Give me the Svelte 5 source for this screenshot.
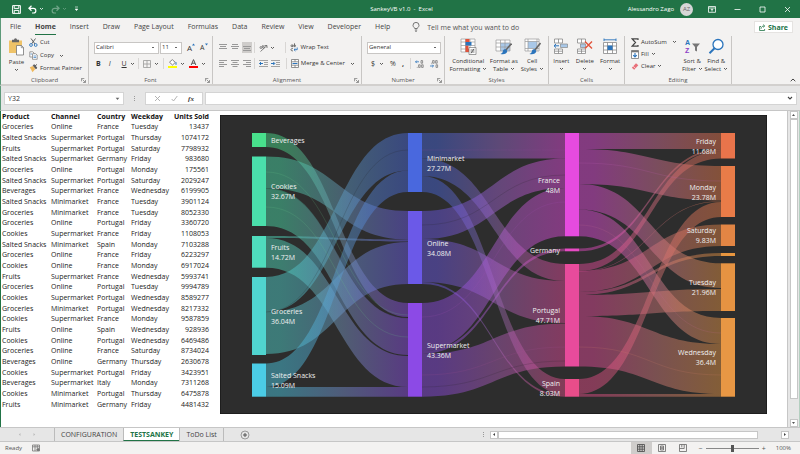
<script>
  const tabs = ['File', 'Home', 'Insert', 'Draw', 'Page Layout', 'Formulas', 'Data', 'Review', 'View', 'Developer', 'Help'];

  const columns = ['Product', 'Channel', 'Country', 'Weekday', 'Units Sold'];
  const rows = `Groceries|Online|France|Tuesday|13437
Salted Snacks|Supermarket|Portugal|Thursday|1074172
Fruits|Supermarket|Portugal|Saturday|7798932
Salted Snacks|Supermarket|Germany|Friday|983680
Groceries|Online|Portugal|Monday|175561
Salted Snacks|Supermarket|Portugal|Saturday|2029247
Beverages|Supermarket|France|Wednesday|6199905
Salted Snacks|Minimarket|France|Tuesday|3901124
Groceries|Minimarket|France|Tuesday|8052330
Groceries|Online|Portugal|Friday|3360720
Cookies|Supermarket|France|Friday|1108053
Salted Snacks|Minimarket|Spain|Monday|7103288
Groceries|Online|France|Friday|6223297
Cookies|Online|France|Monday|6917024
Fruits|Supermarket|France|Wednesday|5993741
Groceries|Online|Portugal|Tuesday|9994789
Cookies|Supermarket|Portugal|Wednesday|8589277
Groceries|Minimarket|Portugal|Wednesday|8217332
Cookies|Supermarket|France|Monday|9587859
Fruits|Online|Spain|Wednesday|928936
Cookies|Online|Portugal|Wednesday|6469486
Groceries|Online|France|Saturday|8734024
Beverages|Online|Germany|Thursday|2630678
Cookies|Supermarket|Portugal|Friday|3423951
Beverages|Supermarket|Italy|Monday|7311268
Cookies|Minimarket|Portugal|Thursday|6475878
Fruits|Minimarket|Germany|Friday|4481432`.split('\n').map((r) => r.split('|'));

  // Sankey nodes: column, top, bottom, colour, label, value
  const nodeX = [32, 188, 345, 501];
  const nodeW = 14;
  const nodes = {
    bev: [0, 18, 32, '#48e08c', 'Beverages', ''],
    coo: [0, 41.5, 111, '#4adfab', 'Cookies', '32.67M'],
    fru: [0, 121, 152.7, '#4fdcbd', 'Fruits', '14.72M'],
    gro: [0, 162, 240, '#50d4cf', 'Groceries', '36.04M'],
    sal: [0, 248.5, 281.7, '#4bcce6', 'Salted Snacks', '15.09M'],
    min: [1, 18, 77, '#4968de', 'Minimarket', '27.27M'],
    onl: [1, 96, 169, '#6b59e8', 'Online', '34.08M'],
    sup: [1, 188, 281.7, '#8c4ae6', 'Supermarket', '43.36M'],
    fra: [2, 18, 121.3, '#e64bdf', 'France', '48M'],
    ger: [2, 133.5, 136.3, '#e84bc4', 'Germany', ''],
    por: [2, 149, 251.5, '#e84b9c', 'Portugal', '47.71M'],
    spa: [2, 264, 281.7, '#e94d8a', 'Spain', '8.03M'],
    fri: [3, 18, 43.5, '#e9744b', 'Friday', '11.68M'],
    mon: [3, 51, 102, '#e97c48', 'Monday', '23.78M'],
    sat: [3, 109.5, 131, '#e28544', 'Saturday', '9.83M'],
    thu: [3, 138, 141, '#e8963f', '', ''],
    tue: [3, 148.3, 196, '#e69342', 'Tuesday', '21.96M'],
    wed: [3, 203, 281.7, '#e89744', 'Wednesday', '36.4M']
  };

  // source, target, top and bottom at the source, top and bottom at the target
  const links = [
    ['bev', 'sup', 18, 32, 188, 202],
    ['coo', 'onl', 41.5, 73, 96, 124.5],
    ['coo', 'sup', 73, 111, 203, 240],
    ['fru', 'onl', 121, 123, 124.5, 126.5],
    ['fru', 'sup', 123, 152.7, 241, 272],
    ['gro', 'min', 162, 197, 18, 55.5],
    ['gro', 'onl', 197, 239, 127, 169],
    ['sal', 'min', 248.5, 272, 55.5, 77],
    ['sal', 'sup', 272, 281.7, 272, 281.7],
    ['min', 'fra', 18, 43.5, 18, 43.5],
    ['min', 'por', 43.5, 61, 149, 166],
    ['min', 'spa', 61, 77, 264, 280],
    ['onl', 'fra', 96, 124, 43.5, 73],
    ['onl', 'por', 124, 167, 166, 208],
    ['onl', 'spa', 167, 169, 280, 281.7],
    ['sup', 'fra', 188, 236, 73, 121.3],
    ['sup', 'ger', 236, 239, 133.5, 136.3],
    ['sup', 'por', 239, 281.7, 208.5, 251.5],
    ['fra', 'fri', 18, 34, 18, 34],
    ['fra', 'mon', 34, 69, 51, 85.5],
    ['fra', 'tue', 69, 94.5, 148.3, 173],
    ['fra', 'wed', 94.5, 121.3, 203, 229],
    ['ger', 'fri', 133.5, 136.3, 34, 36],
    ['por', 'fri', 149, 156, 36, 43.5],
    ['por', 'mon', 156, 156.6, 86, 86.6],
    ['por', 'sat', 156, 177, 109.5, 131],
    ['por', 'thu', 177, 180, 138, 141],
    ['por', 'tue', 180, 201, 174, 196],
    ['por', 'wed', 201, 251.5, 229, 279],
    ['spa', 'mon', 264, 279, 87, 102],
    ['spa', 'wed', 279, 281.7, 279, 281.7]
  ];

  function ribbon([s, t, a0, a1, b0, b1]) {
    const x0 = nodeX[nodes[s][0]] + nodeW;
    const x1 = nodeX[nodes[t][0]];
    const m = (x0 + x1) / 2;
    return `M${x0} ${a0}C${m} ${a0} ${m} ${b0} ${x1} ${b0}L${x1} ${b1}C${m} ${b1} ${m} ${a1} ${x0} ${a1}Z`;
  }

  // midway colour of a band: the average of both ends, slightly greyed
  function midway(a, b) {
    const rgb = [1, 3, 5].map((i) => (parseInt(a.slice(i, i + 2), 16) + parseInt(b.slice(i, i + 2), 16)) / 2);
    const grey = (rgb[0] + rgb[1] + rgb[2]) / 3;
    return `rgb(${rgb.map((v) => Math.round(v * 0.75 + grey * 0.25)).join(',')})`;
  }

  // hairlines that trace the parts inside the wide bands
  const traces = [
    [0, 57, 200, '#6ac98a'], [0, 92, 222, '#6ac98a'], [0, 73.5, 203, '#222'],
    [0, 197, 35, '#222'], [1, 35, 35, '#8f4fa0'], [1, 110, 60, '#222'],
    [1, 202, 87, '#a04fb0'], [1, 260, 232, '#a04f90'], [1, 272, 246, '#222'],
    [2, 48, 66, '#c060b8'], [2, 110, 218, '#c06a90'], [2, 232, 260, '#d08068']
  ];
  const tracePath = ([c, a, b]) => {
    const x0 = nodeX[c] + nodeW;
    const x1 = nodeX[c + 1];
    const m = (x0 + x1) / 2;
    return `M${x0} ${a}C${m} ${a} ${m} ${b} ${x1} ${b}`;
  };

  let active = $state('Home');
  let cell = $state('Y32');
  let formula = $state('');
  let zoom = $state(50);
</script>

{#snippet chev()}<svg class="chev" viewBox="0 0 5 4" aria-hidden="true"><path d="M1 1l1.5 1.5L4 1" /></svg>{/snippet}

{#snippet launch()}
  <button class="launch" aria-label="More options"><svg viewBox="0 0 6 6" width="5" height="5"><path d="M.5 4V.5H4M2 2l3 3M5.400 2.500V5.400H2.500" fill="none" stroke="#666" stroke-width=".8" /></svg></button>
{/snippet}

{#snippet lines(ws, anchor)}
  <svg width="10" height="8" viewBox="0 0 10 8" aria-hidden="true">
    {#each ws as w, i}
      <rect x={anchor === 'l' ? 1 : anchor === 'r' ? 9 - w : 5 - w / 2} y={i * 2} width={w} height="1" fill="#999" />
    {/each}
  </svg>
{/snippet}

<div class="app">
  <header class="title">
    <div class="quick">
      <button aria-label="Save"><svg width="9" height="9" viewBox="0 0 9 9"><path d="M.6.6h7.800v7.800H.6zM2.200.8v2.600h4.600V.8M2.200 8.200V5.400h4.600v2.800" fill="none" stroke="#fff" stroke-width="1" /></svg></button>
      <button aria-label="Undo" class="undo"><svg width="9" height="9" viewBox="0 0 9 9"><path d="M3.500.8L.9 3.300l2.600 2.500M1.200 3.300h4.300a2.300 2.300 0 010 4.700H4" fill="none" stroke="#fff" stroke-width="1.200" /></svg>{@render chev()}</button>
      <button aria-label="Redo" class="undo dim"><svg width="9" height="9" viewBox="0 0 9 9"><path d="M5.500.8l2.600 2.500-2.600 2.500M7.800 3.300H3.500a2.300 2.300 0 000 4.700H5" fill="none" stroke="#fff" stroke-width="1.200" /></svg>{@render chev()}</button>
      <button aria-label="Customize Quick Access Toolbar"><svg width="5" height="6" viewBox="0 0 5 6"><path d="M1 1h3M1.200 3h2.600L2.500 4.600z" fill="#fff" stroke="#fff" stroke-width=".6" /></svg></button>
    </div>
    <h1>SankeyVB v1.0 &nbsp;- &nbsp;Excel</h1>
    <div class="account">
      <span>Alessandro Zago</span>
      <span class="avatar">AZ</span>
      <button aria-label="Ribbon display options"><svg width="8" height="7" viewBox="0 0 8 7"><path d="M.5.5h7v5.800h-7zM.5 2h7M4 5.500V3M2.800 4L4 2.800 5.200 4" fill="none" stroke="#fff" stroke-width=".8" /></svg></button>
      <button aria-label="Minimize"><svg width="7" height="7" viewBox="0 0 7 7"><path d="M.5 3.500h6" stroke="#fff" stroke-width=".8" /></svg></button>
      <button aria-label="Maximize"><svg width="7" height="7" viewBox="0 0 7 7"><path d="M1 1h5v5H1z" fill="none" stroke="#fff" stroke-width=".8" /></svg></button>
      <button aria-label="Close"><svg width="7" height="7" viewBox="0 0 7 7"><path d="M1 1l5 5M6 1L1 6" stroke="#fff" stroke-width=".8" /></svg></button>
    </div>
  </header>

  <nav class="tabs">
    {#each tabs as t}
      <button class:active={t === active} onclick={() => (active = t)}>{t}</button>
    {/each}
    <label class="tell">
      <svg width="8" height="10" viewBox="0 0 8 10"><path d="M2.700 6.500C2.700 5.500 1 5 1 3.400a3 3 0 016 0C7 5 5.300 5.500 5.300 6.500zM2.800 8h2.400M3.200 9.300h1.600" fill="none" stroke="#555" stroke-width=".8" /></svg>
      <input type="text" placeholder="Tell me what you want to do" />
    </label>
    <button class="share"><svg width="7" height="7" viewBox="0 0 7 7"><path d="M2 2.500H.6v4h5V5M2 4.800c.2-1.800 1.300-2.800 3-2.800M4.200.600L5.800 2 4.200 3.400" fill="none" stroke="#217346" stroke-width=".8" /></svg>Share</button>
  </nav>

  <div class="ribbon">
    <section class="g clip">
      <div class="body">
        <button class="big">
          <svg width="17" height="18" viewBox="0 0 17 18"><path d="M1 2.500h13V15H1z" fill="#efc368" /><path d="M4 1.800h2a1.500 1.500 0 013 0h2v2.400H4z" fill="#666" /><path d="M8.500 7.500h5l2 2V17h-7z" fill="#fff" stroke="#777" stroke-width=".8" /><path d="M13.300 7.500v2.200h2.200" fill="none" stroke="#777" stroke-width=".7" /></svg>
          <span>Paste</span>{@render chev()}
        </button>
        <div class="stack">
          <button><svg width="9" height="9" viewBox="0 0 9 9"><path d="M2 .5l4 5.500M6.500.5l-4 5.500" stroke="#555" stroke-width=".9" /><circle cx="2" cy="7" r="1.400" fill="none" stroke="#2a74bc" stroke-width=".9" /><circle cx="6.700" cy="7" r="1.400" fill="none" stroke="#2a74bc" stroke-width=".9" /></svg>Cut</button>
          <button><svg width="9" height="9" viewBox="0 0 9 9"><path d="M.8.8h3l1.200 1.200V6H.8z" fill="#fff" stroke="#777" stroke-width=".7" /><path d="M3.500 2.700h3L8.200 4v4.300H3.500z" fill="#fff" stroke="#777" stroke-width=".7" /><path d="M4.500 5h2.700M4.500 6.500h2.700M1.500 3h1.500" stroke="#2a74bc" stroke-width=".7" /></svg>Copy &nbsp;{@render chev()}</button>
          <button><svg width="9" height="9" viewBox="0 0 9 9"><path d="M.8 3.200L4 2l2.300 3L3.500 8.200z" fill="#efb85c" /><path d="M4.200 1.500l2.700 3.300 1-.900-2.600-3.200zM6 2l2-1.600" fill="#555" stroke="#555" stroke-width=".9" /></svg>Format Painter</button>
        </div>
      </div>
      <footer>Clipboard{@render launch()}</footer>
    </section>

    <section class="g font">
      <div class="body col">
        <div class="line">
          <select class="family" aria-label="Font"><option>Calibri</option></select>
          <select class="size" aria-label="Font size"><option>11</option></select>
          <button class="grow" aria-label="Increase font size">A<svg width="3" height="3" viewBox="0 0 3 3"><path d="M0 2.500L1.500.5 3 2.500z" fill="#2a74bc" /></svg></button>
          <button class="grow sm" aria-label="Decrease font size">A<svg width="3" height="3" viewBox="0 0 3 3"><path d="M0 .5h3L1.500 2.500z" fill="#2a74bc" /></svg></button>
        </div>
        <div class="line style">
          <button class="bi"><b>B</b></button>
          <button class="bi"><i>I</i></button>
          <button><u>U</u> {@render chev()}</button>
          <button class="sep" aria-label="Borders"><svg width="8" height="8" viewBox="0 0 8 8"><path d="M.5.5h7v7h-7zM4 .5v7M.5 4h7" fill="none" stroke="#999" stroke-width=".8" /></svg>{@render chev()}</button>
          <button class="sep" aria-label="Fill color"><svg width="9" height="9" viewBox="0 0 9 9"><path d="M1.500 3.200L4.300.6l3 2.800L4.500 6z" fill="#fff" stroke="#666" stroke-width=".8" /><path d="M8 3.200v2.600" stroke="#2a74bc" stroke-width="1" /><path d="M0 7h9v2H0z" fill="#ff0" /></svg>{@render chev()}</button>
          <button aria-label="Font color"><svg width="9" height="9" viewBox="0 0 9 9"><path d="M2.200 6L4.500.6 6.800 6M3 4.200h3" fill="none" stroke="#555" stroke-width="1" /><path d="M0 7h9v2H0z" fill="#f00" /></svg>{@render chev()}</button>
        </div>
      </div>
      <footer>Font{@render launch()}</footer>
    </section>

    <section class="g align">
      <div class="body col">
        <div class="line">
          <button aria-label="Top align">{@render lines([8, 6, 8], 'c')}</button>
          <button aria-label="Middle align">{@render lines([6, 8, 6], 'c')}</button>
          <button class="on" aria-label="Bottom align">{@render lines([0, 8, 6, 8], 'c')}</button>
          <button class="sep" aria-label="Orientation"><svg width="9" height="8" viewBox="0 0 9 8"><path d="M1.500 7.500L8 1.500M8 4V1.500H5.500" fill="none" stroke="#666" stroke-width=".8" /><path d="M1 3.500a1 1 0 102 0 1 1 0 10-2 0M3.800 1v3a1 1 0 100-1.500" fill="none" stroke="#555" stroke-width=".7" /></svg>{@render chev()}</button>
          <button class="sep wrap"><svg width="8" height="9" viewBox="0 0 8 9"><path d="M1 2.800a1 1 0 102 0 1 1 0 10-2 0M3 1.800v2M4.500.3v3.500a1 1 0 100-2M3 5.800a1.200 1.200 0 100 1.800" fill="none" stroke="#555" stroke-width=".8" /><path d="M7.200 4.500v2.200H4M5.400 5.400L4 6.700 5.400 8" fill="none" stroke="#2a74bc" stroke-width=".9" /></svg>Wrap Text</button>
        </div>
        <div class="line">
          <button aria-label="Align left">{@render lines([8, 5, 8, 5], 'l')}</button>
          <button aria-label="Center">{@render lines([8, 5, 8, 5], 'c')}</button>
          <button aria-label="Align right">{@render lines([8, 5, 8, 5], 'r')}</button>
          <button class="sep" aria-label="Decrease indent"><svg width="10" height="8" viewBox="0 0 10 8"><path d="M0 .5h9M5 2.500h4M5 4.500h4M0 6.500h9" stroke="#999" stroke-width=".9" /><path d="M4 3.500H.5M2 2L.5 3.500 2 5" fill="none" stroke="#2a74bc" stroke-width="1" /></svg></button>
          <button aria-label="Increase indent"><svg width="10" height="8" viewBox="0 0 10 8"><path d="M0 .5h9M5 2.500h4M5 4.500h4M0 6.500h9" stroke="#999" stroke-width=".9" /><path d="M0 3.500h3.500M2.300 2l1.500 1.500L2.300 5" fill="none" stroke="#2a74bc" stroke-width="1" /></svg></button>
          <button class="sep wrap"><svg width="8" height="9" viewBox="0 0 8 9"><path d="M.5.5h7v8h-7zM.5 2.800h7M.5 6.200h7M4 .5v2.300M4 6.200v2.300" fill="#fff" stroke="#777" stroke-width=".8" /><path d="M1.500 4.500h5" stroke="#2a74bc" stroke-width="1" /></svg>Merge &amp; Center &nbsp;{@render chev()}</button>
        </div>
      </div>
      <footer>Alignment{@render launch()}</footer>
    </section>

    <section class="g number">
      <div class="body col">
        <div class="line"><select class="fmt" aria-label="Number format"><option>General</option></select></div>
        <div class="line nums">
          <button>$ {@render chev()}</button>
          <button>%</button>
          <button><b>,</b></button>
          <button class="sep" aria-label="Increase decimal"><svg width="9" height="8" viewBox="0 0 9 8"><path d="M4 1.800H.5M1.800.5L.5 1.800l1.300 1.300" fill="none" stroke="#2a74bc" stroke-width=".8" /><path d="M6 .6h1.600v2.600H6zM3.600 4.800h1.600v2.600H3.600zM6.600 4.800h1.600v2.600H6.600zM1.800 7.400h.8" fill="none" stroke="#555" stroke-width=".6" /></svg></button>
          <button aria-label="Decrease decimal"><svg width="9" height="8" viewBox="0 0 9 8"><path d="M0 6h3.500M2.200 4.700L3.500 6 2.200 7.300" fill="none" stroke="#2a74bc" stroke-width=".8" /><path d="M2.600.6h1.600v2.600H2.600zM5.600.6h1.600v2.600H5.600zM1 3.200h.8M6 4.800h1.600v2.600H6z" fill="none" stroke="#555" stroke-width=".6" /></svg></button>
        </div>
      </div>
      <footer>Number{@render launch()}</footer>
    </section>

    <section class="g styles">
      <div class="body">
        <button class="big"><svg width="17" height="17" viewBox="0 0 17 17"><path d="M1 1h14v13H1zM1 4h14M1 7.500h14M1 11h14M5.500 1v13M10 1v13" fill="#fff" stroke="#999" stroke-width=".7" /><path d="M5.500 1h4v3h-4zM5.500 7.500h3V11h-3zM5.500 11h5v3h-5z" fill="#e2523a" /><path d="M5.500 4h6v3.500h-6z" fill="#2a74bc" /><path d="M9 9.500h7v7H9z" fill="#fff" stroke="#777" stroke-width=".7" /><path d="M10.500 12h4M10.500 14h4M14 10.800l-3 4.500" stroke="#444" stroke-width=".7" /></svg>
          <span>Conditional<br />Formatting {@render chev()}</span></button>
        <button class="big"><svg width="17" height="17" viewBox="0 0 17 17"><path d="M1 2h14v11H1z" fill="#fff" /><path d="M5.500 5h9.500v8H5.500z" fill="#a9c8e8" /><path d="M1 2h14v11H1zM1 5h14M1 9h14M5.500 2v11M10 2v11" fill="none" stroke="#999" stroke-width=".7" /><path d="M16.500 5.500l-6 7" stroke="#666" stroke-width="1.600" /><path d="M11 11.500c-2-1-3 .5-3.200 2-.2 1.500-1.500 2-2.300 2.500 3 .8 6.500 0 6.800-3z" fill="#2a74bc" /></svg>
          <span>Format as<br />Table {@render chev()}</span></button>
        <button class="big"><svg width="17" height="17" viewBox="0 0 17 17"><path d="M1 1h14v12H1z" fill="#fff" /><path d="M4 3.500h9v7H4z" fill="#a9c8e8" /><path d="M1 1h14v12H1zM1 3.500h14M1 10.500h14M4 1v12M13 1v12" fill="none" stroke="#999" stroke-width=".7" /><path d="M16.500 5l-6 7.500" stroke="#666" stroke-width="1.600" /><path d="M11 11.500c-2-1-3 .5-3.200 2-.2 1.500-1.500 2-2.300 2.500 3 .8 6.500 0 6.800-3z" fill="#2a74bc" /></svg>
          <span>Cell<br />Styles {@render chev()}</span></button>
      </div>
      <footer>Styles</footer>
    </section>

    <section class="g cells">
      <div class="body">
        <button class="big"><svg width="17" height="17" viewBox="0 0 17 17"><path d="M1.500 1h8v4h-8zM5.500 1v4M1.500 11h8v4.500h-8zM5.500 11v4.500M1.500 13.200h8" fill="#fff" stroke="#888" stroke-width=".8" /><path d="M7.500 6h7v3.500h-7z" fill="#a9c8e8" stroke="#888" stroke-width=".7" /><path d="M6 7.800H1M3 6L1 7.800l2 1.800" fill="none" stroke="#2a74bc" stroke-width="1" /></svg><span>Insert</span>{@render chev()}</button>
        <button class="big"><svg width="17" height="17" viewBox="0 0 17 17"><path d="M1.500 1h8v4h-8zM5.500 1v4M1.500 11h8v4.500h-8zM5.500 11v4.500M1.500 13.200h8" fill="#fff" stroke="#888" stroke-width=".8" /><path d="M4.500 6h5v3.500h-5z" fill="#a9c8e8" stroke="#888" stroke-width=".7" /><path d="M9 3.500l7 7M16 3.500l-7 7" stroke="#e2523a" stroke-width="1.400" /></svg><span>Delete</span>{@render chev()}</button>
        <button class="big"><svg width="17" height="17" viewBox="0 0 17 17"><path d="M1.500 4.500h13v11h-13zM1.500 8h13M1.500 12h13M5.500 4.500v11M10.500 4.500v11" fill="#fff" stroke="#888" stroke-width=".8" /><path d="M5.500 7.500h5v4.500h-5z" fill="#2a74bc" /><path d="M2 1.800h12M2 .5v2.600M14 .5v2.600" stroke="#2a74bc" stroke-width=".9" /></svg><span>Format</span>{@render chev()}</button>
      </div>
      <footer>Cells</footer>
    </section>

    <section class="g edit">
      <div class="body">
        <div class="stack">
          <button><svg width="8" height="9" viewBox="0 0 8 9"><path d="M7 2V.9H1.200L4.500 4.500 1.200 8.100H7V7" fill="none" stroke="#444" stroke-width="1.200" /></svg>AutoSum &nbsp; {@render chev()}</button>
          <button><svg width="8" height="9" viewBox="0 0 8 9"><path d="M.5.5h7v8h-7z" fill="#fff" stroke="#777" stroke-width=".8" /><path d="M.5.500h7v1.800h-7z" fill="#777" /><path d="M4 3v4M2.200 5.200L4 7l1.800-1.800" fill="none" stroke="#2a74bc" stroke-width="1.100" /></svg>Fill {@render chev()}</button>
          <button><svg width="8" height="9" viewBox="0 0 8 9"><path d="M.8 5.800L5 1.300l2.300 2L3.200 7.800z" fill="#e8707a" /><path d="M2.200 4.300l2.300 2.100" stroke="#fff" stroke-width=".6" /></svg>Clear {@render chev()}</button>
        </div>
        <button class="big"><svg class="az" width="17" height="17" viewBox="0 0 17 17"><text x="1" y="7" fill="#2a74bc">A</text><text x="1" y="15" fill="#8b3fc6">Z</text><path d="M8 5.500h8l-3 3.500v4.500l-2-1V9z" fill="#777" /></svg><span>Sort &amp;<br />Filter {@render chev()}</span></button>
        <button class="big"><svg width="17" height="17" viewBox="0 0 17 17"><circle cx="10" cy="6.500" r="5" fill="#fff" stroke="#2a74bc" stroke-width="1.300" /><path d="M6.500 10.300l-5 5" stroke="#2a74bc" stroke-width="2" /></svg><span>Find &amp;<br />Select {@render chev()}</span></button>
      </div>
      <footer>Editing</footer>
    </section>
    <button class="collapse" aria-label="Collapse the ribbon"><svg width="6" height="4" viewBox="0 0 6 4"><path d="M.7 3.200L3 1l2.300 2.200" fill="none" stroke="#444" /></svg></button>
  </div>

  <div class="formula">
    <label class="name"><input aria-label="Name box" bind:value={cell} /><svg width="5" height="4" viewBox="0 0 5 4"><path d="M.7.8h3.600L2.500 3z" fill="#666" /></svg></label>
    <span class="dots"></span>
    <div class="fx">
      <button aria-label="Cancel"><svg width="7" height="7" viewBox="0 0 7 7"><path d="M1 1l5 5M6 1L1 6" stroke="#aaa" stroke-width=".9" /></svg></button>
      <button aria-label="Enter"><svg width="7" height="7" viewBox="0 0 7 7"><path d="M.7 4l1.800 2L6.300 1" fill="none" stroke="#aaa" stroke-width=".9" /></svg></button>
      <button class="fn">fx</button>
    </div>
    <label class="entry"><input aria-label="Formula bar" bind:value={formula} /><svg width="6" height="5" viewBox="0 0 6 5"><path d="M1 1l2 2 2-2" fill="none" stroke="#444" stroke-width="1.100" /></svg></label>
  </div>

  <main>
    <div class="sheet">
      <table>
        <thead><tr>{#each columns as c}<th scope="col">{c}</th>{/each}</tr></thead>
        <tbody>
          {#each rows as r}<tr>{#each r as v}<td>{v}</td>{/each}</tr>{/each}
        </tbody>
      </table>
      <svg class="chart" viewBox="0 0 547 299" role="img" aria-label="Sankey diagram of units sold by product, channel, country and weekday">
        <defs>
          {#each links as l}
            {@const from = nodes[l[0]]}
            {@const to = nodes[l[1]]}
            <linearGradient id="{l[0]}-{l[1]}" gradientUnits="userSpaceOnUse" x1={nodeX[from[0]] + nodeW} x2={nodeX[to[0]]} y1="0" y2="0">
              <stop offset=".1" stop-color={from[3]} />
              <stop offset=".55" stop-color={midway(from[3], to[3])} />
              <stop offset="1" stop-color={to[3]} />
            </linearGradient>
          {/each}
        </defs>
        <rect class="panel" width="547" height="299" />
        {#each links as l}<path class="link" d={ribbon(l)} fill="url(#{l[0]}-{l[1]})" />{/each}
        {#each traces as t}<path class="trace" d={tracePath(t)} stroke={t[3]} />{/each}
        {#each Object.values(nodes) as [c, y0, y1, fill, name, value]}
          {@const right = c > 1}
          {@const x = right ? nodeX[c] - 5 : nodeX[c] + 19}
          {@const mid = (y0 + y1) / 2}
          <rect x={nodeX[c]} y={y0} width={nodeW} height={y1 - y0} {fill} />
          {#if name}<text {x} y={value ? mid - 2 : mid + 3} text-anchor={right ? 'end' : 'start'}>{name}</text>{/if}
          {#if value}<text {x} y={mid + 8} text-anchor={right ? 'end' : 'start'}>{value}</text>{/if}
        {/each}
      </svg>
    </div>
    <div class="vbar">
      <button aria-label="Scroll up"><svg width="5" height="4" viewBox="0 0 5 4"><path d="M1 3h3L2.500 1z" fill="#555" /></svg></button>
      <span class="thumb"></span>
      <span class="rest"></span>
      <button aria-label="Scroll down"><svg width="5" height="4" viewBox="0 0 5 4"><path d="M1 1h3L2.500 3z" fill="#555" /></svg></button>
    </div>
  </main>

  <div class="sheets">
    <div class="arrows"><svg width="3" height="5" viewBox="0 0 3 5"><path d="M2.500 1v3L.8 2.500z" fill="#bbb" /></svg><svg width="3" height="5" viewBox="0 0 3 5"><path d="M.5 1v3l1.700-1.500z" fill="#bbb" /></svg></div>
    <button>CONFIGURATION</button>
    <button class="current">TESTSANKEY</button>
    <button>ToDo List</button>
    <button class="add" aria-label="New sheet"><svg width="10" height="10" viewBox="0 0 10 10"><circle cx="5" cy="5" r="4" fill="none" stroke="#888" stroke-width=".8" /><path d="M5 3v4M3 5h4" stroke="#555" stroke-width="1" /></svg></button>
    <div class="hbar">
      <span class="dots"></span>
      <button aria-label="Scroll left"><svg width="4" height="5" viewBox="0 0 4 5"><path d="M3 1v3L1 2.500z" fill="#444" /></svg></button>
      <span class="thumb"></span>
      <span class="rest"></span>
      <button aria-label="Scroll right"><svg width="4" height="5" viewBox="0 0 4 5"><path d="M1 1v3l2-1.500z" fill="#444" /></svg></button>
    </div>
  </div>

  <footer class="status">
    <span>Ready</span>
    <svg width="9" height="8" viewBox="0 0 9 8"><path d="M.5 1h7v6h-7zM.5 2.800h7M3 1v6M5.300 1v3" fill="none" stroke="#777" stroke-width=".8" /><circle cx="6" cy="5.500" r="1.600" fill="#777" /></svg>
    <div class="views">
      <button class="on" aria-label="Normal"><svg width="8" height="8" viewBox="0 0 8 8"><path d="M.5.5h7v7h-7zM.5 2.800h7M.5 5.200h7M2.800.5v7M5.200.5v7" fill="none" stroke="#555" stroke-width=".9" /></svg></button>
      <button aria-label="Page layout"><svg width="8" height="8" viewBox="0 0 8 8"><path d="M.5.5h7v7h-7zM2.500 2h3v4h-3zM2.500 3.300h3M2.500 4.700h3" fill="none" stroke="#666" stroke-width=".8" /></svg></button>
      <button aria-label="Page break preview"><svg width="8" height="8" viewBox="0 0 8 8"><path d="M.5.5h7v7h-7zM.5 4.500h4.700V.5M2.800.5v2.800" fill="none" stroke="#666" stroke-width=".8" /></svg></button>
    </div>
    <label class="zoom"><span>−</span><input type="range" min="0" max="100" aria-label="Zoom" bind:value={zoom} /><span>+</span></label>
    <span class="pct">100%</span>
  </footer>
</div>

<style>
  :global(body) { margin: 0; }
  .app { min-height: 100vh; display: flex; flex-direction: column; background: #f3f2f1; font: 6px/9px 'Open Sans', 'Noto Sans', sans-serif; color: #333; box-sizing: border-box; }
  button, input, select { font: inherit; color: inherit; border: 0; background: none; padding: 0; margin: 0; border-radius: 0; outline: 0; min-width: 0; }
  button { display: flex; align-items: center; white-space: nowrap; }
  svg { display: block; flex: none; }
  .az text { font: 700 7px 'Liberation Sans', sans-serif; }
  .chev { display: inline-block; width: 5px; height: 4px; vertical-align: middle; }
  .chev path { fill: none; stroke: currentColor; stroke-width: .8; }

  .title { display: flex; align-items: center; height: 18px; background: #217346; color: #fff; }
  .quick, .account { flex: 1; display: flex; align-items: center; }
  .quick { padding-left: 12px; gap: 7px; }
  .undo { gap: 2px; }
  .dim { opacity: .35; }
  h1 { margin: 0; font-size: 6px; font-weight: 400; line-height: 18px; white-space: nowrap; }
  .account { justify-content: flex-end; gap: 18px; padding-right: 9px; }
  .avatar { width: 13px; height: 13px; line-height: 13px; border-radius: 50%; background: #d6d6d6; color: #666; text-align: center; margin: 0 -3px 0 -12px; }

  .tabs { display: flex; align-items: center; height: 18px; padding: 0 7px 0 9px; gap: 14px; font-size: 7px; color: #444; border-left: 1px solid #5d9a79; box-sizing: border-box; }
  .tabs > button { height: 15px; border-bottom: 1px solid transparent; box-sizing: border-box; }
  .tabs > .active { font-weight: 700; border-bottom: 1px solid #217346; }
  .tell { flex: 1; display: flex; align-items: center; gap: 7px; margin-left: 8px; }
  .tell input { flex: 1; height: 12px; }
  .tell input::placeholder { color: #555; opacity: 1; }
  .tabs > .share { gap: 2px; height: 12px; padding: 0 4px; background: #fff; color: #217346; font-weight: 700; border: 1px solid #e5e3e1; }

  .ribbon { display: flex; height: 50px; box-sizing: border-box; border-left: 1px solid #5d9a79; border-bottom: 2px solid #d2d0ce; }
  .g { display: flex; flex-direction: column; border-right: 1px solid #c8c6c4; box-sizing: border-box; }
  .body { flex: 1; display: flex; justify-content: center; gap: 6px; }
  .body.col { flex-direction: column; justify-content: flex-start; padding-top: 5px; gap: 3px; }
  .g footer { position: relative; height: 8px; text-align: center; color: #555; }
  .launch { position: absolute; right: 2px; top: 2px; }
  .stack { display: flex; flex-direction: column; }
  .stack button { height: 12px; gap: 2px; }
  .clip .stack button { height: 13px; }
  .big { flex-direction: column; align-self: flex-start; padding-top: 2px; text-align: center; }
  .big span { line-height: 8px; margin-top: 2px; }
  .big > .chev { margin-top: 2px; }
  .line { display: flex; align-items: center; height: 13px; }
  .clip { width: 88px; } .font { width: 124px; } .align { width: 149px; } .number { width: 83px; }
  .styles { width: 104px; } .cells { width: 76px; } .edit { width: 107px; }
  .clip .body { justify-content: flex-start; padding-left: 7px; gap: 4px; }
  .font .body, .number .body { padding-left: 5px; }
  .styles .body { gap: 3px; }
  .edit .body { gap: 2px; justify-content: flex-start; padding-left: 6px; }
  .edit .stack { padding-right: 3px; }
  select { appearance: none; height: 12px; border: 1px solid #c8c6c4; background: #fff linear-gradient(#666, #666) no-repeat right 4px center / 2px 1px; padding: 0 3px 0 1px; box-sizing: border-box; }
  .family { width: 65px; } .size { width: 22px; margin-left: 1px; } .fmt { width: 74px; }
  .grow { font-size: 8px; margin-left: 5px; align-items: flex-start; }
  .sm { font-size: 7px; }
  .style { justify-content: space-between; padding: 0 6px 0 2px; font-size: 7px; }
  .style button { gap: 3px; }
  .style .bi { width: 9px; }
  .sep { border-left: 1px solid #d8d6d4; padding-left: 4px; height: 11px; }
  .align .body { padding-left: 5px; }
  .align .line { gap: 2px; }
  .align .line button { height: 11px; gap: 2px; }
  .align .line .wrap { margin-left: auto; }
  .align .line:first-child .wrap { padding-right: 32px; }
  .align .line:last-child .wrap { padding-right: 6px; }
  .on { background: #cfcdcb; }
  .nums { justify-content: space-between; padding: 0 5px 0 4px; font-size: 7px; }
  .nums button { gap: 4px; }
  .collapse { margin: auto 4px 0 auto; height: 8px; }

  .formula { display: flex; height: 25px; padding: 6px 3px 5px 3px; box-sizing: border-box; background: #e6e6e6; gap: 4px; border-bottom: 1px solid #c6c6c6; border-left: 1px solid #5d9a79; font-size: 7px; }
  .formula input { flex: 1; }
  .name, .fx, .entry { display: flex; align-items: center; background: #fff; border: 1px solid #d4d4d4; box-sizing: border-box; padding: 0 3px; }
  .name { width: 120px; }
  .fx { width: 58px; justify-content: space-around; }
  .fn { font: italic 700 7px 'Liberation Serif', serif; }
  .entry { flex: 1; margin-left: -2px; }
  .dots { width: 1px; height: 6px; margin: auto 6px; background: repeating-linear-gradient(#999 0 1px, transparent 1px 2px); }

  main { flex: 1; display: flex; background: #e6e6e6; }
  .sheet { flex: 1; display: flex; align-items: flex-start; background: #fff; border-left: 1px solid #217346; border-right: 1px solid #c6c6c6; padding-right: 20px; min-width: 0; }
  table { width: 208px; flex: none; margin-right: 11px; border-collapse: collapse; table-layout: fixed; font-size: 7px; line-height: 10px; color: #222; }
  tr { height: 11px; }
  tbody tr:nth-child(3n + 1) { height: 10px; }
  th, td { padding: 0 0 0 1px; text-align: left; white-space: nowrap; line-height: 10px; }
  th { color: #111; }
  th:nth-child(1) { width: 48px; } th:nth-child(2) { width: 45px; } th:nth-child(3) { width: 33px; } th:nth-child(4) { width: 41px; }
  th:last-child, td:last-child { text-align: right; }
  .chart { flex: 1; min-width: 0; height: auto; margin-top: 4px; }
  .panel { fill: #2d2d2d; stroke: #111; }
  .link { opacity: .46; }
  .trace { fill: none; stroke-width: .6; opacity: .3; }
  .chart text { fill: #f0f0f0; font-size: 7px; }
  .vbar { width: 12px; display: flex; flex-direction: column; align-items: center; border-right: 1px solid #b4cfc0; box-sizing: border-box; }
  .vbar button, .hbar button { background: #fff; border: 1px solid #c6c6c6; width: 8px; height: 8px; justify-content: center; box-sizing: border-box; }
  .vbar .thumb { flex: 14; width: 6px; background: #fff; border: 1px solid #c6c6c6; }
  .vbar .rest { flex: 1; }

  .sheets { display: flex; align-items: center; height: 15px; box-sizing: border-box; background: #e6e6e6; border-top: 1px solid #c6c6c6; border-bottom: 1px solid #c6c6c6; font-size: 7px; color: #444; }
  .arrows { display: flex; justify-content: center; gap: 12px; width: 54px; }
  .sheets > button { height: 13px; padding: 0 6px; border-left: 1px solid #bbb; }
  .sheets > .current { background: #fff; color: #217346; font-weight: 700; border-bottom: 1px solid #217346; box-sizing: border-box; }
  .sheets > .add { padding: 0 0 0 16px; }
  .hbar { display: flex; align-items: center; width: 312px; margin-left: auto; padding-right: 11px; }
  .hbar .thumb { flex: 11; height: 6px; background: #fff; border: 1px solid #c6c6c6; }
  .hbar .rest { flex: 1; }

  .status { display: flex; align-items: center; height: 12px; padding: 0 9px 0 5px; gap: 10px; color: #555; }
  .views { display: flex; margin-left: auto; }
  .views button { width: 21px; height: 12px; justify-content: center; }
  .zoom { display: flex; align-items: center; gap: 3px; font-size: 7px; margin-left: -5px; }
  .zoom input { appearance: none; width: 53px; height: 8px; background: linear-gradient(#888, #888) no-repeat center / 100% 1px; }
  .zoom input::-webkit-slider-thumb { appearance: none; width: 3px; height: 7px; background: #555; }
</style>
